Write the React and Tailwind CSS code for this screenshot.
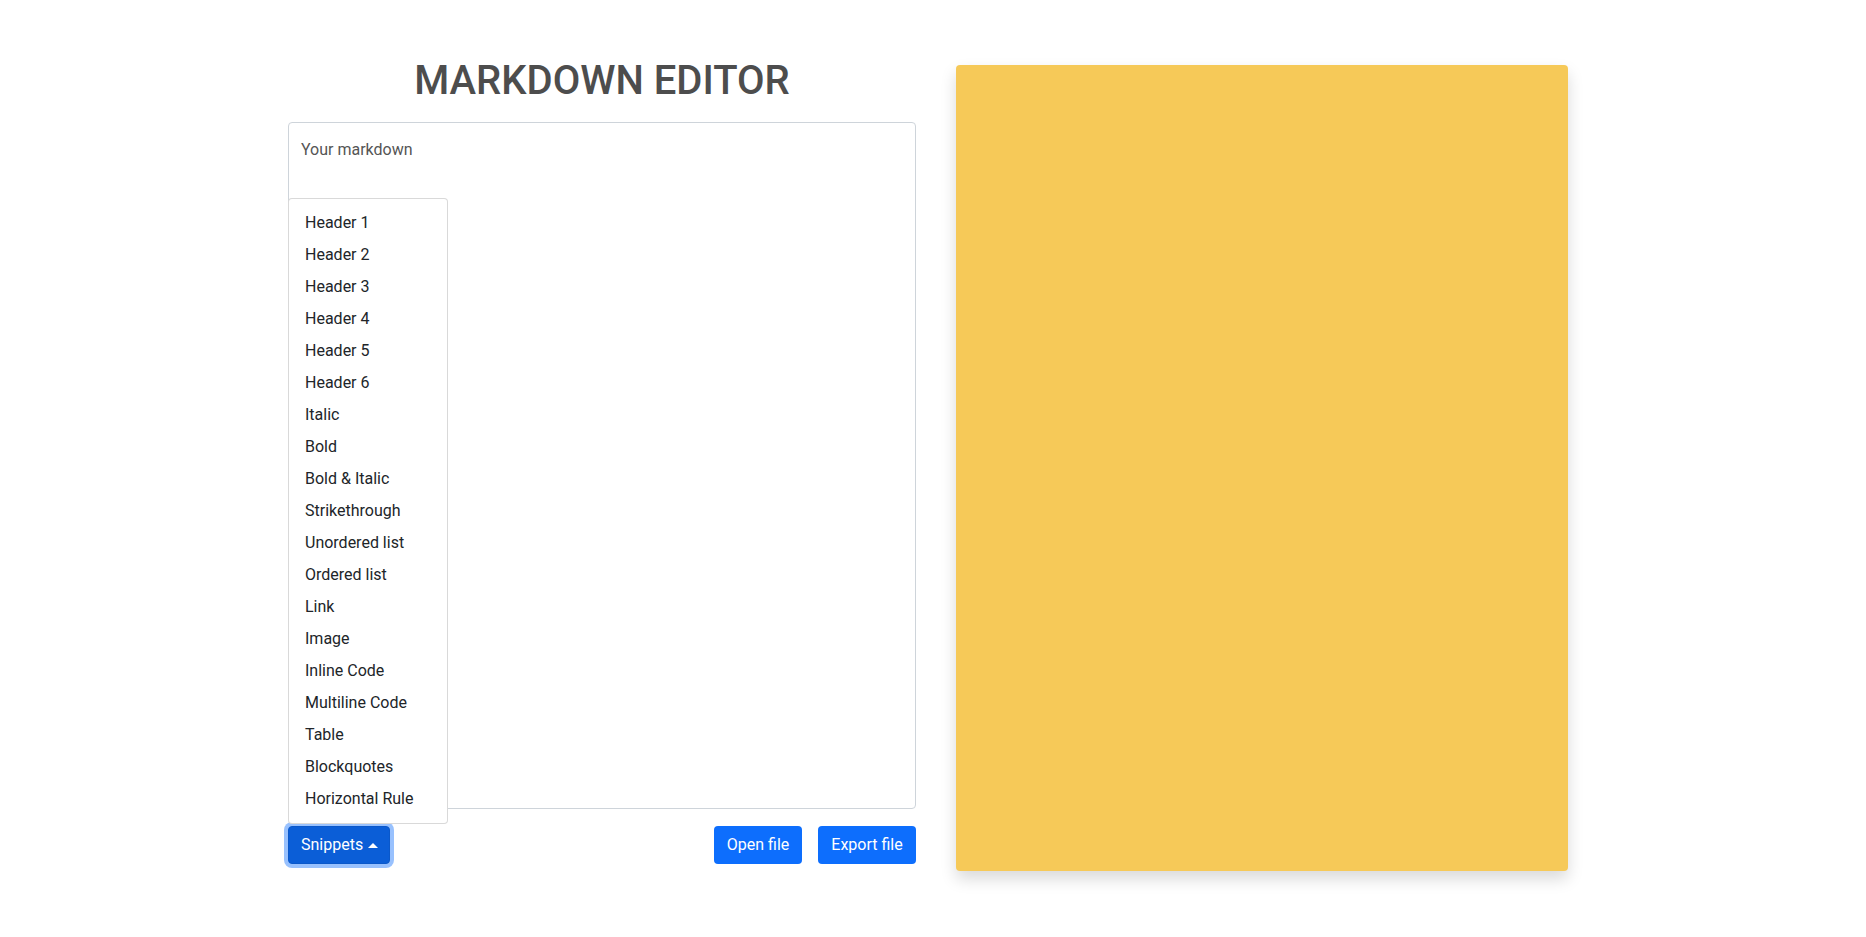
import React, { useState } from "react";

const snippets = [
  "Header 1",
  "Header 2",
  "Header 3",
  "Header 4",
  "Header 5",
  "Header 6",
  "Italic",
  "Bold",
  "Bold & Italic",
  "Strikethrough",
  "Unordered list",
  "Ordered list",
  "Link",
  "Image",
  "Inline Code",
  "Multiline Code",
  "Table",
  "Blockquotes",
  "Horizontal Rule",
];

const App = () => {
  const [text, setText] = useState("");
  const [menuOpen, setMenuOpen] = useState(true);

  return (
    <div className="min-h-screen bg-white font-['Roboto','Liberation_Sans',sans-serif] text-[#212529]">
      <div className="flex justify-center gap-[40px] pt-[56px] pr-[10px]">
        {/* Editor */}
        <div className="w-[628px] flex flex-col">
          <h1 className="h-[48px] leading-[48px] mt-[1px] mb-[17px] text-center text-[40px] font-medium text-[#4d4d4d]">
            MARKDOWN EDITOR
          </h1>
          <textarea
            value={text}
            onChange={(e) => setText(e.target.value)}
            placeholder="Your markdown"
            className="h-[687px] w-full resize-none rounded-[4px] border border-[#ced4da] bg-white px-3 pt-[15px] text-base leading-6 outline-none placeholder:text-[#555]"
          />

          <div className="mt-[17px] flex items-center justify-between">
            {/* Snippets dropup */}
            <div className="relative">
              {menuOpen && (
                <ul className="absolute left-0 bottom-full mb-[2px] z-10 min-w-[160px] rounded-[4px] border border-black/15 bg-white py-2">
                  {snippets.map((name) => (
                    <li
                      key={name}
                      className="px-4 py-1 text-base leading-6 whitespace-nowrap text-[#212529] hover:bg-[#e9ecef] cursor-pointer"
                    >
                      {name}
                    </li>
                  ))}
                </ul>
              )}
              <button
                onClick={() => setMenuOpen(!menuOpen)}
                className="flex h-[38px] items-center rounded-[4px] border border-[#0a58ca] bg-[#0b5ed7] pl-3 pr-[11px] text-base text-white shadow-[0_0_0_4px_rgba(49,132,253,0.5)]"
              >
                Snippets
                <span className="ml-[5px] inline-block h-0 w-0 border-x-[5px] border-b-[5px] border-x-transparent border-b-white" />
              </button>
            </div>

            <div className="flex gap-4">
              <button className="h-[38px] w-[88px] rounded-[4px] bg-[#0d6efd] text-base text-white">
                Open file
              </button>
              <button className="h-[38px] w-[98px] rounded-[4px] bg-[#0d6efd] text-base text-white">
                Export file
              </button>
            </div>
          </div>
        </div>

        {/* Preview */}
        <div className="w-[612px] pt-[9px]">
          <div className="h-[806px] rounded-[4px] bg-[#f6c958] shadow-[0_8px_16px_rgba(0,0,0,0.15)]" />
        </div>
      </div>
    </div>
  );
};

export default App;
